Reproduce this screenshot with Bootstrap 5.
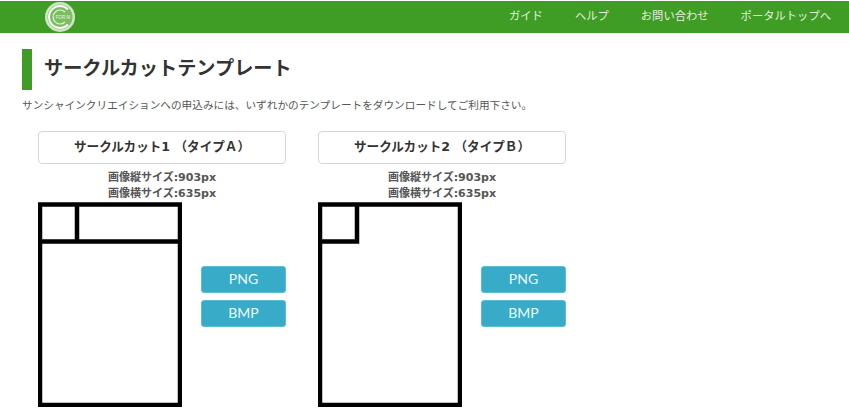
<!doctype html>
<html lang="ja">
<head>
<meta charset="utf-8">
<title>サークルカットテンプレート</title>
<link href="https://cdn.jsdelivr.net/npm/bootstrap@5.3.0/dist/css/bootstrap.min.css" rel="stylesheet">
<style>
html,body{height:419px;overflow:hidden}
body{background:#fff;color:#333;font-family:"DejaVu Sans","Noto Sans CJK JP",sans-serif;padding-top:1px}
.topbar{background:#3f9d26;height:32px;padding:0 18px 3px 45px}
.topbar a{color:#e4f0df;font-size:11.3px;text-decoration:none;font-family:"Noto Sans CJK JP",sans-serif;line-height:29px}
.toplinks{gap:32px}
.logo-mark{width:30px;height:30px;display:block;margin-bottom:-3px}
.page-body{padding:16px 0 0 22px}
.page-title{border-left:10px solid #3f9d26;height:41px;padding-left:12px;font-size:19.2px;line-height:36px;font-weight:700;margin:0 0 6px;color:#333;font-family:"Noto Sans CJK JP",sans-serif}
.intro{font-size:10.65px;line-height:18px;margin:0 0 17px;font-family:"Noto Sans CJK JP",sans-serif;color:#555}
.tmpl-grid{display:grid;grid-template-columns:248px 248px;column-gap:32px;margin-left:16px}
.tmpl-name{height:33px;border:1px solid #d6d6d6;border-radius:4px;font-size:12.6px;font-weight:700;line-height:29px;text-align:center;color:#333;margin-bottom:6px}
.tmpl-size{font-size:11px;font-weight:700;line-height:16px;text-align:center;color:#555}
.tmpl-row{display:flex;justify-content:space-between}
.sheet{width:144px;height:205px;display:block}
.dl-col{width:85px;padding-top:64px;display:flex;flex-direction:column;gap:7px}
.dl-col .btn{background:#37abc8;border:1px solid #5dbdd5;color:#eefafd;font-family:"Lato",sans-serif;font-size:14px;height:27px;padding:0 0 2px;line-height:23px;border-radius:3px}
</style>
</head>
<body>
<nav class="topbar d-flex justify-content-between align-items-center">
  <svg class="logo-mark" viewBox="0 0 30 30" role="img" aria-label="ロゴ">
    <circle cx="15" cy="15" r="15" fill="#cfe6c4"/>
    <circle cx="15" cy="15" r="12.500" fill="#7dbd62"/>
    <path d="M23 7.500A11 11 0 1 0 23 22.500" fill="none" stroke="#f4faf1" stroke-width="2"/>
    <path d="M20 10A7 7 0 1 0 20 20" fill="none" stroke="#e3f1dc" stroke-width="1.200"/>
    <text x="18" y="17" font-size="4.500" fill="#e8f4e2" text-anchor="middle" font-family="Liberation Sans">FOR.M</text>
  </svg>
  <div class="d-flex toplinks">
    <a href="#">ガイド</a>
    <a href="#">ヘルプ</a>
    <a href="#">お問い合わせ</a>
    <a href="#">ポータルトップへ</a>
  </div>
</nav>
<main class="page-body">
  <h1 class="page-title">サークルカットテンプレート</h1>
  <p class="intro">サンシャインクリエイションへの申込みには、いずれかのテンプレートをダウンロードしてご利用下さい。</p>
  <div class="tmpl-grid">
    <section>
      <div class="tmpl-name">サークルカット1 （タイプＡ）</div>
      <div class="tmpl-size">画像縦サイズ:903px</div>
      <div class="tmpl-size">画像横サイズ:635px</div>
      <div class="tmpl-row">
        <svg class="sheet" viewBox="0 0 144 205"><path d="M2 2.500H142V203H2ZM2 39.500H142M39 2V39.500" fill="none" stroke="#000" stroke-width="4.500"/></svg>
        <div class="dl-col"><button class="btn">PNG</button><button class="btn">BMP</button></div>
      </div>
    </section>
    <section>
      <div class="tmpl-name">サークルカット2 （タイプＢ）</div>
      <div class="tmpl-size">画像縦サイズ:903px</div>
      <div class="tmpl-size">画像横サイズ:635px</div>
      <div class="tmpl-row">
        <svg class="sheet" viewBox="0 0 144 205"><path d="M2 2.500H142V203H2ZM2 39.500H39V2" fill="none" stroke="#000" stroke-width="4.500"/></svg>
        <div class="dl-col"><button class="btn">PNG</button><button class="btn">BMP</button></div>
      </div>
    </section>
  </div>
</main>
<script src="https://cdn.jsdelivr.net/npm/bootstrap@5.3.0/dist/js/bootstrap.bundle.min.js"></script>
</body>
</html>
